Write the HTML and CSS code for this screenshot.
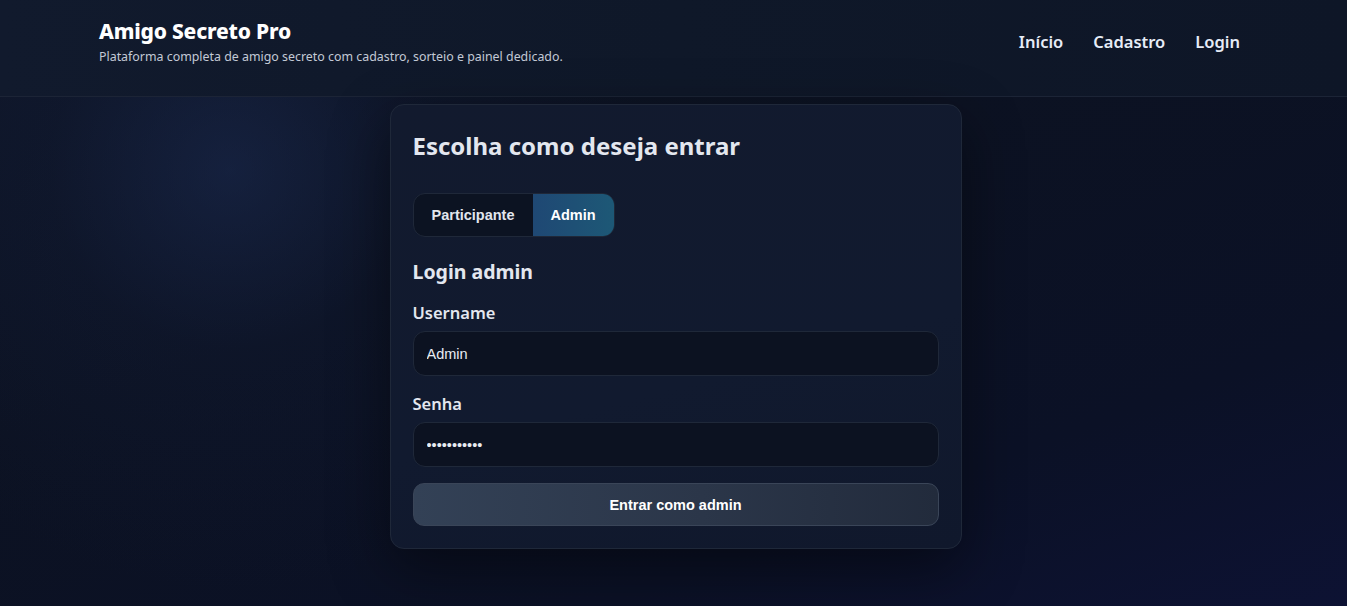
FILE: index.html
```html
<!DOCTYPE html>
<html lang="pt-BR">
<head>
<meta charset="utf-8">
<title>Amigo Secreto Pro</title>
<link rel="stylesheet" href="styles.css">
</head>
<body>
<header class="site-header">
  <div class="header-inner">
    <div class="brand">
      <h1 class="brand-title">Amigo Secreto Pro</h1>
      <p class="brand-sub">Plataforma completa de amigo secreto com cadastro, sorteio e painel dedicado.</p>
    </div>
    <nav class="nav">
      <a class="nav-link" href="#">Início</a>
      <a class="nav-link" href="#">Cadastro</a>
      <a class="nav-link" href="#">Login</a>
    </nav>
  </div>
</header>
<main class="main">
  <section class="card">
    <h2 class="card-title">Escolha como deseja entrar</h2>
    <div class="tabs">
      <button class="tab">Participante</button>
      <button class="tab tab-active">Admin</button>
    </div>
    <h3 class="form-title">Login admin</h3>
    <form class="form">
      <label class="field">
        <span class="field-label">Username</span>
        <input class="input" type="text" value="Admin">
      </label>
      <label class="field">
        <span class="field-label">Senha</span>
        <input class="input" type="password" value="adminsenha1">
      </label>
      <button class="submit" type="button">Entrar como admin</button>
    </form>
  </section>
</main>
</body>
</html>
```
FILE: styles.css
```css
* { box-sizing: border-box; }
html, body { height: 100%; }
body {
  margin: 0;
  font-family: "Noto Sans", "Open Sans", "DejaVu Sans", sans-serif;
  color: #e5e9f2;
  background:
    radial-gradient(circle at 230px 170px, rgba(30, 48, 92, 0.45) 0, rgba(20, 32, 64, 0.22) 180px, rgba(0,0,0,0) 420px),
    linear-gradient(160deg, #0f1628 0%, #0c1222 40%, #0b1126 75%, #0d1233 100%);
  min-height: 606px;
  overflow: hidden;
}
.site-header {
  height: 97px;
  background: linear-gradient(90deg, #111a2d 0%, #0f1829 50%, #0e1627 100%);
  border-bottom: 1px solid #1c2436;
}
.header-inner {
  max-width: 1149px;
  margin: 0 auto;
  height: 100%;
  display: flex;
  align-items: flex-start;
  justify-content: space-between;
  padding-top: 17px;
}
.brand-title {
  margin: 0;
  font-size: 21px;
  font-weight: 800;
  color: #ffffff;
  line-height: 28px;
  letter-spacing: -0.2px;
}
.brand-sub {
  margin: 4px 0 0;
  font-size: 12.4px;
  color: #c3c9d6;
  line-height: 16px;
}
.nav {
  display: flex;
  gap: 30px;
  padding-top: 14px;
  padding-right: 8px;
}
.nav-link {
  color: #e6ecf7;
  text-decoration: none;
  font-size: 16.5px;
  font-weight: 600;
  line-height: 22px;
}
.main {
  display: flex;
  justify-content: center;
  padding-top: 7px;
}
.card {
  width: 572px;
  margin-left: 4px;
  background: linear-gradient(165deg, #121a2e 0%, #111a2f 60%, #10182c 100%);
  border: 1px solid #1f2839;
  border-radius: 14px;
  padding: 24px 22px 22px;
  box-shadow: 0 20px 60px rgba(0, 0, 0, 0.45);
}
.card-title {
  margin: 0;
  font-size: 24px;
  font-weight: 700;
  color: #e3e7ef;
  line-height: 34px;
}
.tabs {
  display: inline-flex;
  margin-top: 30px;
  border: 1px solid #1f2839;
  border-radius: 12px;
  overflow: hidden;
  background: #0c1322;
}
.tab {
  font-family: "Liberation Sans", Arial, sans-serif;
  font-weight: 700;
  font-size: 14.5px;
  color: #e2e6ee;
  background: transparent;
  border: 0;
  height: 42px;
  padding: 0 18px;
}
.tab-active {
  color: #ffffff;
  background: linear-gradient(90deg, #1f4874 0%, #1d5876 100%);
}
.form-title {
  margin: 20px 0 0;
  font-size: 19.5px;
  font-weight: 700;
  color: #e3e7ef;
  line-height: 30px;
}
.form {
  display: flex;
  flex-direction: column;
}
.field {
  display: flex;
  flex-direction: column;
  margin-top: 14px;
}
.field + .field { margin-top: 16px; }
.field-label {
  font-size: 16.5px;
  font-weight: 600;
  color: #e3e7ef;
  line-height: 24px;
  margin-bottom: 6px;
}
.input {
  height: 45px;
  width: 100%;
  background: #0c1221;
  border: 1px solid #1f2839;
  border-radius: 12px;
  color: #e8ecf3;
  font-family: "Liberation Sans", Arial, sans-serif;
  font-size: 14.5px;
  padding: 0 13px;
  outline: none;
}
.submit {
  margin-top: 16px;
  height: 43px;
  width: 100%;
  border-radius: 11px;
  border: 1px solid #3a4558;
  background: linear-gradient(90deg, #334156 0%, #2b3649 55%, #222b3c 100%);
  color: #ffffff;
  font-family: "Liberation Sans", Arial, sans-serif;
  font-weight: 700;
  font-size: 14.5px;
}
```
